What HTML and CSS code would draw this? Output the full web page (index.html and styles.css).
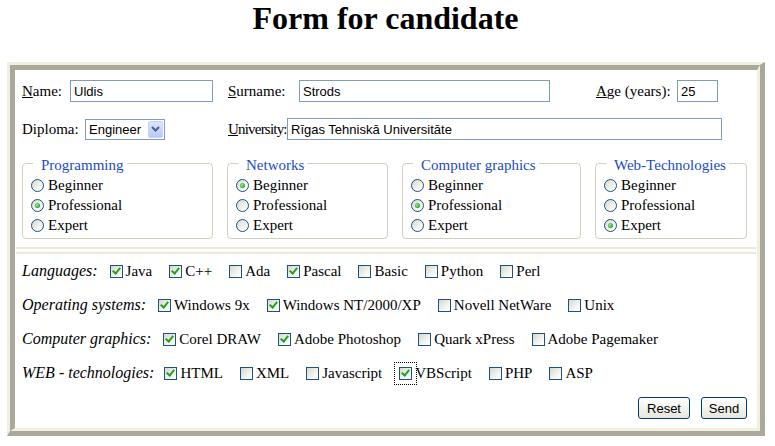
FILE: index.html
```html
<!DOCTYPE html>
<html lang="en">
<head>
<meta charset="utf-8">
<title>Form for candidate</title>
<link rel="stylesheet" href="styles.css">
</head>
<body>
<h1 class="title">Form for candidate</h1>
<form class="frame">
  <div class="frame-inner">
    <div class="row">
      <label class="lbl lbl-name" for="f-name"><span class="ak">N</span>ame:</label>
      <input id="f-name" class="field in-name" type="text" value="Uldis">
      <label class="lbl lbl-surname" for="f-surname"><span class="ak">S</span>urname:</label>
      <input id="f-surname" class="field in-surname" type="text" value="Strods">
      <label class="lbl lbl-age" for="f-age"><span class="ak">A</span>ge (years):</label>
      <input id="f-age" class="field in-age" type="text" value="25">
    </div>
    <div class="row row-2">
      <label class="lbl lbl-diploma" for="f-diploma">Diploma:</label>
      <span class="select-wrap">
        <select id="f-diploma" class="select">
          <option>Engineer</option>
          <option>Bachelor</option>
          <option>Master</option>
        </select>
        <span class="select-btn"><svg width="9" height="6" viewBox="0 0 9 6"><path d="M1 1 L4.5 4.5 L8 1" fill="none" stroke="#4d6185" stroke-width="2"/></svg></span>
      </span>
      <label class="lbl lbl-univ" for="f-univ"><span class="ak">U</span>niversity:</label>
      <input id="f-univ" class="field in-univ" type="text" value="Rīgas Tehniskā Universitāte">
    </div>

    <div class="levels">
      <fieldset class="level level-prog">
        <legend>Programming</legend>
        <label class="opt-r"><input class="rb" type="radio" name="prog">Beginner</label>
        <label class="opt-r"><input class="rb" type="radio" name="prog" checked>Professional</label>
        <label class="opt-r"><input class="rb" type="radio" name="prog">Expert</label>
      </fieldset>
      <fieldset class="level level-net">
        <legend>Networks</legend>
        <label class="opt-r"><input class="rb" type="radio" name="net" checked>Beginner</label>
        <label class="opt-r"><input class="rb" type="radio" name="net">Professional</label>
        <label class="opt-r"><input class="rb" type="radio" name="net">Expert</label>
      </fieldset>
      <fieldset class="level level-cg">
        <legend>Computer graphics</legend>
        <label class="opt-r"><input class="rb" type="radio" name="cg">Beginner</label>
        <label class="opt-r"><input class="rb" type="radio" name="cg" checked>Professional</label>
        <label class="opt-r"><input class="rb" type="radio" name="cg">Expert</label>
      </fieldset>
      <fieldset class="level level-web">
        <legend>Web-Technologies</legend>
        <label class="opt-r"><input class="rb" type="radio" name="web">Beginner</label>
        <label class="opt-r"><input class="rb" type="radio" name="web">Professional</label>
        <label class="opt-r"><input class="rb" type="radio" name="web" checked>Expert</label>
      </fieldset>
    </div>

    <div class="sep"></div>

    <div class="cb-row">
      <span class="cb-cat">Languages:</span>
      <div class="opts">
        <label class="opt"><input class="cb" type="checkbox" checked>Java</label>
        <label class="opt"><input class="cb" type="checkbox" checked>C++</label>
        <label class="opt"><input class="cb" type="checkbox">Ada</label>
        <label class="opt"><input class="cb" type="checkbox" checked>Pascal</label>
        <label class="opt"><input class="cb" type="checkbox">Basic</label>
        <label class="opt"><input class="cb" type="checkbox">Python</label>
        <label class="opt"><input class="cb" type="checkbox">Perl</label>
      </div>
    </div>
    <div class="cb-row">
      <span class="cb-cat">Operating systems:</span>
      <div class="opts">
        <label class="opt"><input class="cb" type="checkbox" checked>Windows 9x</label>
        <label class="opt"><input class="cb" type="checkbox" checked>Windows NT/2000/XP</label>
        <label class="opt"><input class="cb" type="checkbox">Novell NetWare</label>
        <label class="opt"><input class="cb" type="checkbox">Unix</label>
      </div>
    </div>
    <div class="cb-row">
      <span class="cb-cat">Computer graphics:</span>
      <div class="opts">
        <label class="opt"><input class="cb" type="checkbox" checked>Corel DRAW</label>
        <label class="opt"><input class="cb" type="checkbox" checked>Adobe Photoshop</label>
        <label class="opt"><input class="cb" type="checkbox">Quark xPress</label>
        <label class="opt"><input class="cb" type="checkbox">Adobe Pagemaker</label>
      </div>
    </div>
    <div class="cb-row">
      <span class="cb-cat cb-cat-web">WEB - technologies:</span>
      <div class="opts">
        <label class="opt"><input class="cb" type="checkbox" checked>HTML</label>
        <label class="opt"><input class="cb" type="checkbox">XML</label>
        <label class="opt"><input class="cb" type="checkbox">Javascript</label>
        <label class="opt"><input class="cb cb-focus" type="checkbox" checked>VBScript</label>
        <label class="opt"><input class="cb" type="checkbox">PHP</label>
        <label class="opt"><input class="cb" type="checkbox">ASP</label>
      </div>
    </div>

    <div class="actions">
      <button class="btn btn-reset" type="reset">Reset</button>
      <button class="btn btn-send" type="submit">Send</button>
    </div>
  </div>
</form>
</body>
</html>
```
FILE: styles.css
```css
body {
  margin: 0;
  font-family: "Liberation Serif", "Times New Roman", serif;
  font-size: 15px;
  color: #000;
  background: #fff;
}

.title {
  margin: 0 0 28px;
  padding: 0 4px 0 0;
  height: 34px;
  text-align: center;
  font-size: 32px;
  line-height: 36px;
  font-weight: bold;
  overflow: visible;
}

.frame {
  margin: 0 10px 0 7px;
  border-style: solid;
  border-width: 3px 5px 5px 3px;
  border-color: #f1efe2 #aca899 #aca899 #f1efe2;
}

.frame-inner {
  border-style: solid;
  border-width: 5px 3px 3px 5px;
  border-color: #aca899 #f1efe2 #f1efe2 #aca899;
  padding: 10px 9px 9px 7px;
  background: #fff;
}

/* text rows */
.row {
  display: flex;
  align-items: center;
  height: 22px;
}
.row-2 { margin-top: 16px; }

.lbl { flex: none; white-space: nowrap; }
.ak { text-decoration: underline; }
.lbl-name { width: 48px; }
.lbl-surname { width: 71px; margin-left: 15px; }
.lbl-age { width: 81px; margin-left: 46px; }
.lbl-diploma { width: 63px; }
.lbl-univ { width: 59px; margin-left: 63px; letter-spacing: -0.8px; }

.field {
  box-sizing: border-box;
  height: 22px;
  margin: 0;
  padding: 0 3px;
  border: 1px solid #7f9db9;
  background: #fff;
  color: #000;
  font: 13px "Liberation Sans", Arial, sans-serif;
  outline: none;
  flex: none;
}
.in-name { width: 143px; }
.in-surname { width: 251px; }
.in-age { width: 41px; }
.in-univ { width: 435px; }

.select-wrap {
  position: relative;
  flex: none;
  width: 80px;
  height: 21px;
}
.select {
  -webkit-appearance: none;
  appearance: none;
  box-sizing: border-box;
  width: 100%;
  height: 100%;
  margin: 0;
  padding: 0 0 0 3px;
  border: 1px solid #7f9db9;
  background: #fff;
  color: #000;
  font: 13px "Liberation Sans", Arial, sans-serif;
  outline: none;
}
.select-btn {
  position: absolute;
  top: 2px;
  right: 2px;
  bottom: 2px;
  width: 15px;
  box-sizing: border-box;
  border: 1px solid #c3d3fd;
  border-radius: 2px;
  background: linear-gradient(#dbe5fd, #b6c9f7);
  display: flex;
  align-items: center;
  justify-content: center;
  pointer-events: none;
}

/* fieldsets */
.levels {
  display: flex;
  gap: 14px;
  margin-top: 13px;
}
.level {
  box-sizing: border-box;
  margin: 0;
  min-width: 0;
  padding: 1px 6px 3px 8px;
  border: 1px solid #d0d0bf;
  border-radius: 4px;
}
.level legend {
  margin-left: 2px;
  padding: 4px 3px 0 8px;
  line-height: 17px;
  color: #1a4cc0;
}
.level-prog { width: 191px; }
.level-net { width: 161px; }
.level-cg { width: 179px; }
.level-web { width: 152px; }

.opt-r {
  display: flex;
  align-items: center;
  height: 20px;
  white-space: nowrap;
}

.rb {
  -webkit-appearance: none;
  appearance: none;
  position: relative;
  flex: none;
  box-sizing: border-box;
  width: 13px;
  height: 13px;
  margin: 0 4px 0 0;
  border: 1px solid #1c5180;
  border-radius: 50%;
  background: linear-gradient(135deg, #d6d6ce, #f4f4ef 60%, #fff);
}
.rb:checked::after {
  content: "";
  position: absolute;
  left: 3px;
  top: 3px;
  width: 5px;
  height: 5px;
  border-radius: 50%;
  background: radial-gradient(circle at 40% 40%, #9be89b, #21a121 75%);
}

/* separator */
.sep {
  height: 3px;
  margin: 8px -8px 0 -6px;
  border-top: 2px solid #ece9d8;
  border-bottom: 2px solid #ece9d8;
}

/* checkbox rows */
.cb-row {
  display: flex;
  align-items: center;
  height: 34px;
}
.cb-cat {
  flex: none;
  margin-right: 12px;
  font-size: 16px;
  font-style: italic;
  white-space: nowrap;
}
.cb-cat-web { margin-right: 10px; }
.opts {
  display: flex;
  align-items: center;
  gap: 17px;
}
.opt {
  display: flex;
  align-items: center;
  white-space: nowrap;
}
.cb {
  -webkit-appearance: none;
  appearance: none;
  position: relative;
  flex: none;
  box-sizing: border-box;
  width: 13px;
  height: 13px;
  margin: 0 3px 0 0;
  border: 1px solid #1c5180;
  background: linear-gradient(135deg, #d6d6ce, #f4f4ef 60%, #fff);
}
.cb:checked::after {
  content: "";
  position: absolute;
  left: 3px;
  top: 0px;
  width: 3px;
  height: 6px;
  border: solid #21a121;
  border-width: 0 2px 2px 0;
  transform: rotate(40deg);
}
.cb-focus {
  outline: 1px dotted #000;
  outline-offset: 4px;
}

/* buttons */
.actions {
  display: flex;
  justify-content: flex-end;
  gap: 11px;
  margin-top: 7px;
  margin-right: 1px;
}
.btn {
  box-sizing: border-box;
  height: 22px;
  margin: 0;
  padding: 0;
  border: 1px solid #003c74;
  border-radius: 3px;
  background: linear-gradient(#ffffff, #f4f4f0 45%, #e6e6de);
  color: #000;
  font: 13px "Liberation Sans", Arial, sans-serif;
}
.btn-reset { width: 52px; }
.btn-send { width: 46px; }
```
